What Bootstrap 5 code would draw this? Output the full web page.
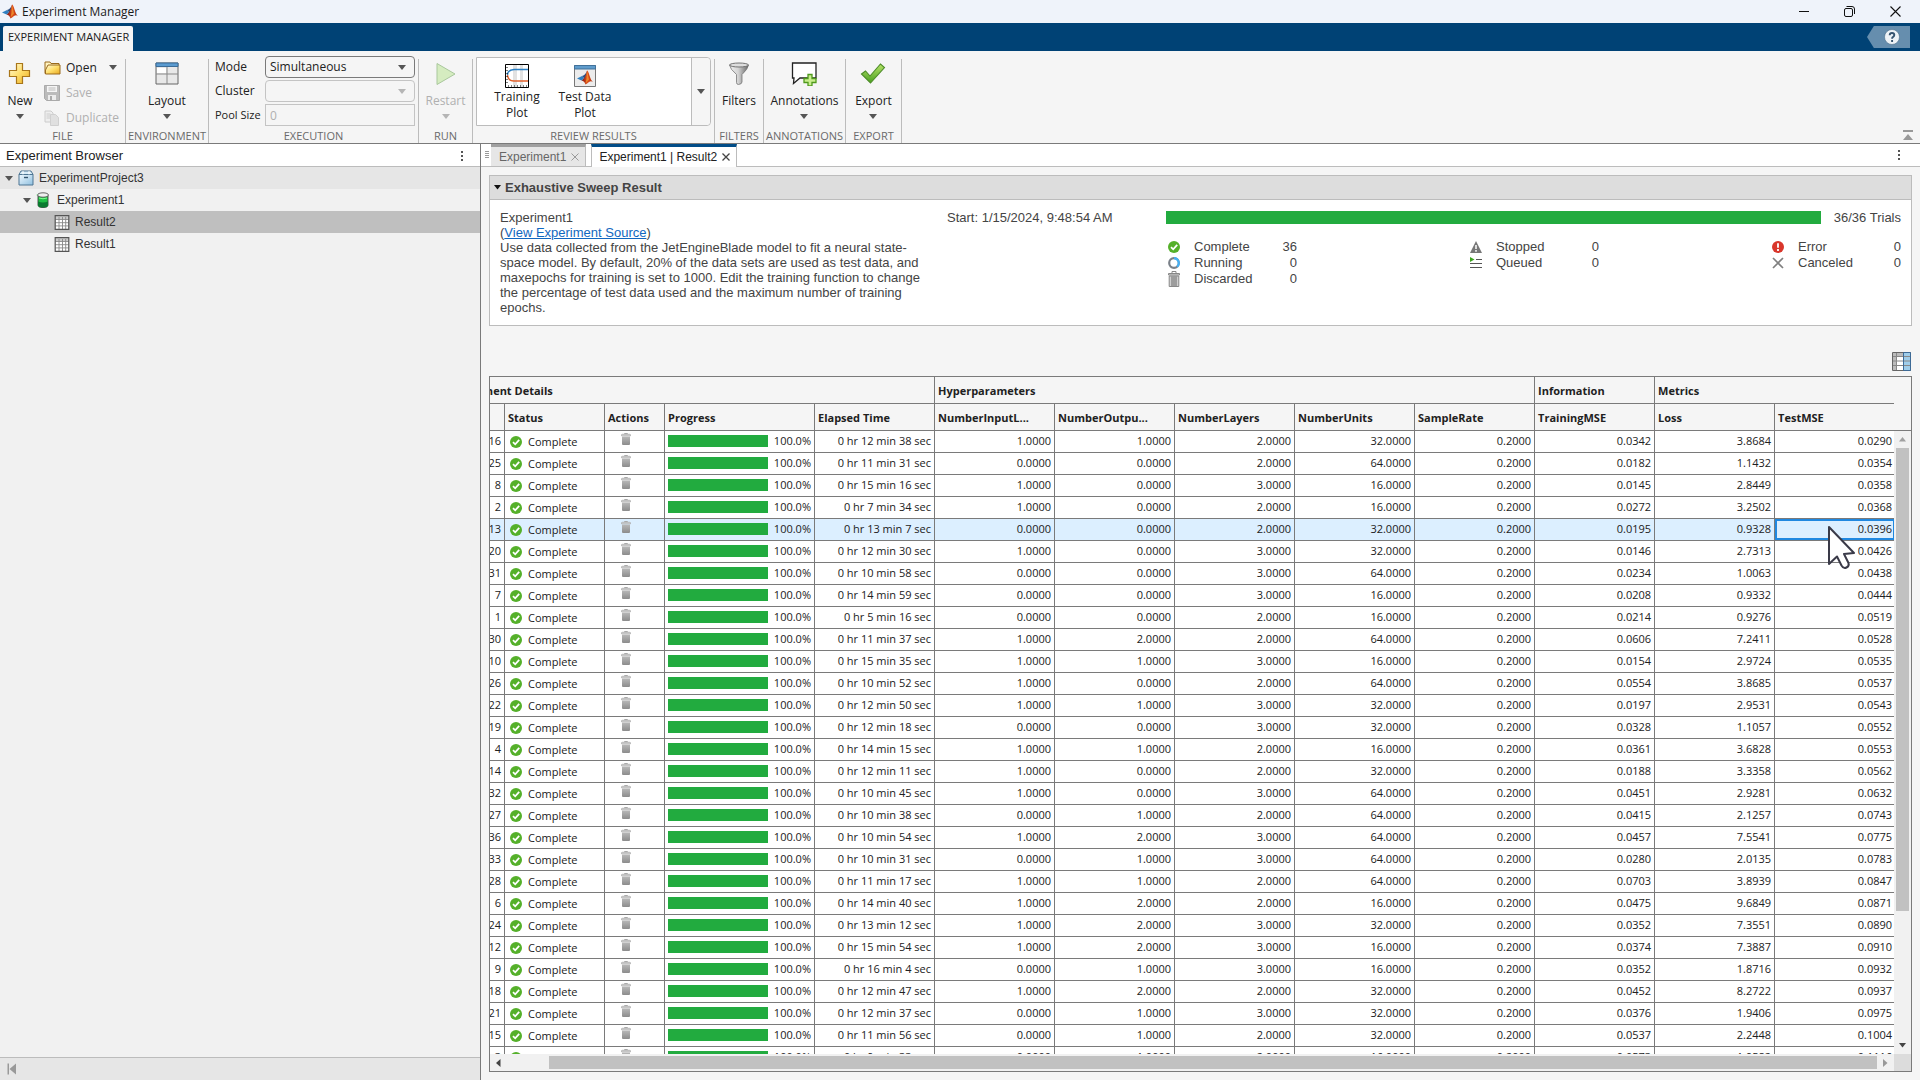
<!DOCTYPE html>
<html lang="en">
<head>
<meta charset="utf-8">
<meta name="viewport" content="width=device-width, initial-scale=1">
<title>Experiment Manager</title>
<link href="https://cdn.jsdelivr.net/npm/bootstrap@5.3.0/dist/css/bootstrap.min.css" rel="stylesheet">
<style>
  :root { --ui: "Open Sans", "Noto Sans", sans-serif; --doc: "Liberation Sans", Arial, sans-serif; --line: #7a7a7a; --soft: #bcbcbc; --go: #22ab3f; }
  body { font: 12px/16px var(--ui); color: #212121; background: #f5f5f5; height: 100vh; overflow: hidden; }
  svg { display: block; flex: none; }
  button { font: inherit; color: inherit; background: none; border: 0; padding: 0; }
  .caret { width: 0; height: 0; border: 4px solid transparent; border-top: 5px solid #555; border-bottom: 0; flex: none; }
  .faded { color: #b0b0b0; }
  .faded .caret { border-top-color: #b5b5b5; }

  .titlebar { height: 23px; background: #eff3fa; color: #1a1a1a; padding: 0 19px 0 2px; }
  .titlebar .win { gap: 35px; }
  .ribbon { height: 28px; background: #004275; padding: 3px 10px 0 3px; }
  .ribbon-tab { height: 25px; background: #f5f5f5; border-radius: 2px 2px 0 0; padding: 0 4px 3px 5px; font-size: 11px; }
  .help { width: 43px; height: 22px; background: #668eae; clip-path: polygon(16% 0, 100% 0, 100% 100%, 16% 100%, 0 50%); padding-left: 6px; }

  .strip { height: 93px; border-bottom: 1px solid var(--line); padding-top: 8px; font-size: 12px; }
  .group { border-right: 1px solid var(--soft); }
  .group-body { flex: 1; min-height: 0; }
  .group-name { font-size: 11px; line-height: 14px; color: #6a6a6a; text-align: center; }
  .big { display: flex; flex-direction: column; align-items: center; padding-top: 3px; }
  .big svg { margin-bottom: 7px; }
  .big .caret { margin-top: 5px; }
  .new-btn { width: 40px; }
  .file-list { margin-top: -4px; }
  .small-btn { display: flex; align-items: center; gap: 5px; height: 25px; }
  .g-file { width: 126px; }
  .g-env { width: 83px; } .g-exec { width: 210px; } .g-run { width: 54px; }
  .g-review { width: 242px; } .g-filter { width: 49px; } .g-note { width: 82px; } .g-export { width: 56px; }
  .exec { gap: 2px; margin-top: -3px; padding-left: 6px; }
  .exec label { width: 50px; white-space: nowrap; font-size: 12px; }
  .exec label.tight { font-size: 11px; }
  .field { width: 150px; height: 22px; font: 12px/18px var(--ui); padding: 0 4px; background-color: #f5f5f5; border: 1px solid #c4c4c4; border-radius: 0; color: #212121; appearance: none; }
  .field:disabled { background-color: #f5f5f5; color: #b0b0b0; opacity: 1; }
  .pick { position: relative; }
  .pick .field { border-radius: 4px; display: block; }
  .pick .caret { position: absolute; right: 9px; top: 9px; pointer-events: none; }
  .pick.live .field { border-color: var(--line); }
  .gallery { border: 1px solid var(--soft); border-radius: 0 4px 4px 0; background: #fff; height: 69px; margin: -2px 3px 0; }
  .gallery-list { padding-left: 6px; }
  .gallery-more { width: 19px; background: #f5f5f5; border-left: 1px solid var(--soft); border-radius: 0 4px 4px 0; }
  .shot { width: 68px; display: flex; flex-direction: column; align-items: center; line-height: 16px; padding-top: 6px; }
  .shot svg { margin-bottom: 1px; }
  .collapse-btn { padding: 0 6px 2px 0; }

  main { min-height: 0; }
  .browser { flex: 0 0 25%; background: #f1f1f1; font: 12px/22px var(--doc); color: #333; }
  .pane-head { height: 23px; background: #fff; border-bottom: 1px solid var(--soft); font-size: 13px; line-height: 20px; color: #212121; padding: 1px 16px 0 6px; }
  .node { height: 22px; gap: 5px; font-size: 12px; color: #333; }
  .lvl0 { padding-left: 5px; background: #e6e6e6; } .lvl1 { padding-left: 23px; } .lvl2 { padding-left: 54px; }
  .node.on { background: #bfbfbf; }
  .browser-foot { height: 23px; background: #e6e6e6; border-top: 1px solid var(--soft); padding-left: 7px; }

  .work { border-left: 1px solid var(--line); font-family: var(--doc); min-width: 0; min-height: 0; }
  .doc-tabs { height: 23px; flex: none; background: #fff; border-bottom: 1px solid var(--soft); padding: 0 19px 0 3px; font-size: 12px; }
  .doc-tab { height: 22px; border-top: 3px solid #a0a0a0; background: #e6e6e6; color: #666; border-right: 1px solid var(--soft); padding: 0 6px 0 8px; gap: 5px; line-height: 18px; }
  .doc-tab.on { height: 23px; margin-left: 5px; border-top-color: #004c87; background: #fff; color: #212121; border-left: 1px solid var(--soft); padding-left: 7px; }
  .sheet { padding: 8px; min-height: 0; }
  .summary { flex: none; border: 1px solid var(--soft); font-size: 13px; line-height: 15px; color: #444; }
  .summary-head { height: 24px; background: #ddd; border-bottom: 1px solid var(--soft); font-weight: bold; gap: 4px; padding-left: 4px; font-size: 13px; }
  .summary-body { height: 125px; background: #fff; padding: 10px 10px 0; }
  .about { flex: 0 0 447px; padding-right: 20px; }
  .about a { color: #1167c0; }
  .started { flex: 1 1 219px; }
  .tally { flex: 0 1 735px; }
  .overall { gap: 13px; margin-bottom: 14px; }
  .meter { height: 13px; border-radius: 0; background: #ddd; --bs-progress-bar-bg: var(--go); }
  .counts { width: 131px; line-height: 16px; }
  .counts > div { height: 16px; }
  .counts .pic { width: 28px; padding-left: 2px; }
  .tools { height: 50px; flex: none; padding: 0 1px 5px 0; }

  .frame { border: 1px solid var(--line); min-height: 0; font-family: var(--ui); }
  .view { min-width: 0; min-height: 0; overflow: hidden; }
  .trials { width: calc(100% + 45px); margin-left: -45px; table-layout: fixed; border-collapse: separate; border-spacing: 0; font-size: 11px; line-height: 16px; color: #212121; }
  .trials th { height: 27px; padding: 1px 3px 0; border-right: 1px solid var(--line); border-bottom: 1px solid var(--line); font-size: 11px; font-weight: 700; overflow: hidden; text-overflow: ellipsis; white-space: nowrap; }
  .trials td { height: 22px; padding: 2px 3px 0; background: #fff; border-right: 1px solid var(--line); border-bottom: 1px solid var(--line); text-align: right; vertical-align: top; white-space: nowrap; }
  .trials td:last-child { border-right: 0; }
  .trials tr.on td { background: #dcefff; }
  .trials td.act svg { margin-left: 13px; }
  .ok-cell { gap: 5px; padding: 1px 0 0 1px; }
  .trials td.focus { position: relative; box-shadow: inset 0 0 0 2px #2088e0; }
  .pointer { position: absolute; left: 52px; top: 6px; z-index: 2; }
  .bar { width: 100px; height: 12px; background: #e0e0e0; border-radius: 0; --bs-progress-bar-bg: var(--go); }
  .vbar { width: 17px; flex: none; background: #f1f1f1; }
  .vbar-top { height: 54px; flex: none; background: #f5f5f5; border-bottom: 1px solid var(--line); }
  .cap { width: 17px; height: 17px; display: flex; align-items: center; justify-content: center; flex: none; }
  .vthumb { width: 13px; height: 78.6%; margin-left: 2px; background: #c1c1c1; }
  .hbar { height: 17px; flex: none; background: #f1f1f1; }
  .hthumb { height: 13px; width: 96.9%; background: #c1c1c1; }
  .corner { width: 17px; background: #dcdcdc; }
</style>
<script src="https://cdn.jsdelivr.net/npm/bootstrap@5.3.0/dist/js/bootstrap.bundle.min.js"></script>
</head>
<body class="d-flex flex-column">

<svg width="0" height="0" class="position-absolute" aria-hidden="true">
  <defs>
    <linearGradient id="gold" x1="0" y1="0" x2="1" y2="1"><stop offset="0" stop-color="#fffbe0"/><stop offset=".5" stop-color="#ffdf6b"/><stop offset="1" stop-color="#e8a820"/></linearGradient>
    <linearGradient id="steel" x1="0" y1="0" x2="1" y2="0"><stop offset="0" stop-color="#eee"/><stop offset=".45" stop-color="#d5d5d5"/><stop offset="1" stop-color="#666"/></linearGradient>
    <linearGradient id="binfill" x1="0" y1="0" x2="0" y2="1"><stop offset="0" stop-color="#b8b8b8"/><stop offset="1" stop-color="#8c8c8c"/></linearGradient>
    <linearGradient id="leaf" x1="0" y1="0" x2="0" y2="1"><stop offset="0" stop-color="#b6e368"/><stop offset="1" stop-color="#4aa020"/></linearGradient>
    <linearGradient id="box" x1="0" y1="0" x2="1" y2="1"><stop offset="0" stop-color="#f0f9ff"/><stop offset="1" stop-color="#8fc0e0"/></linearGradient>
    <linearGradient id="ember" x1="0" y1="0" x2="1" y2="0"><stop offset="0" stop-color="#7a1010"/><stop offset=".5" stop-color="#e2501c"/><stop offset="1" stop-color="#b03010"/></linearGradient>
    <symbol id="ok" viewBox="0 0 12 12"><circle cx="6" cy="6" r="6" fill="#55b02a"/><path d="M3 6.200 5.200 8.300 9.200 3.900" fill="none" stroke="#fff" stroke-width="1.800"/></symbol>
    <symbol id="bin" viewBox="0 0 10 12"><path d="M3.500 1V.500h3V1" fill="none" stroke="#aaa"/><path d="M.500 2.800V2q0-.700.700-.700h7.600q.700 0 .700.700v.8z" fill="#e4e4e4" stroke="#a8a8a8" stroke-width=".8"/><path d="M1 3.500h8V11q0 1-1 1H2q-1 0-1-1z" fill="url(#binfill)"/></symbol>
    <symbol id="sheet" viewBox="0 0 15 15"><path d="M1 1h13v13H1z" fill="#fff"/><path d="M1 1h13v3H1z" fill="#ccc"/><path d="M1 4.500h13M1 7.700h13M1 10.900h13M4.500 2v12M8 2v12M11.200 2v12" stroke="#888" stroke-width=".9"/><path d="M.700.700h13.600v13.600H.700z" fill="none" stroke="#555" stroke-width="1.200"/></symbol>
    <symbol id="membrane" viewBox="0 0 16 14"><path d="M0 8 5 5.500 7 7.500 4.500 10z" fill="#2f7fc0"/><path d="M5 5.500Q8 5 10 .500L8.500 9 4.500 10 7 7.500z" fill="#2c4f80"/><path d="M10 0Q11 0 12.500 5T16 11.500Q14 10 12 11.500T8.500 14Q7.500 10.500 4.500 10 8 9 10 0z" fill="url(#ember)"/><path d="M10 .500 9.500 8 8.500 13 12 9z" fill="#f2a030" opacity=".7"/></symbol>
  </defs>
</svg>

<header>
  <div class="titlebar d-flex align-items-center">
    <svg width="16" height="15" class="me-1"><use href="#membrane"/></svg>
    <span>Experiment Manager</span>
    <div class="win d-flex align-items-center ms-auto">
      <button aria-label="Minimize"><svg width="10" height="11"><path d="M0 5.500h10" stroke="#111"/></svg></button>
      <button aria-label="Restore"><svg width="11" height="11" fill="none" stroke="#111"><rect x=".5" y="2.500" width="8" height="8" rx="1.500"/><path d="M2.500.500H8Q10.500.500 10.500 3v5"/></svg></button>
      <button aria-label="Close"><svg width="11" height="11"><path d="M.5.500l10 10M10.500.500l-10 10" stroke="#111" stroke-width="1.100"/></svg></button>
    </div>
  </div>
  <div class="ribbon d-flex justify-content-between align-items-start">
    <button class="ribbon-tab">EXPERIMENT MANAGER</button>
    <button class="help d-flex align-items-center justify-content-center" aria-label="Help"><svg width="16" height="16"><circle cx="8" cy="8" r="7.500" fill="#eef3f7" stroke="#4c6f8c" stroke-width=".6"/><path d="M5.700 6.200Q5.700 4 8 4t2.300 2q0 1.200-1.200 1.900Q8.100 8.400 8.100 9.700M8.100 11v1.900" fill="none" stroke="#34536f" stroke-width="1.900"/></svg></button>
  </div>
  <div class="strip d-flex">
    <section class="group g-file d-flex flex-column">
      <div class="group-body d-flex">
        <button class="big new-btn"><svg width="24" height="24"><path d="M8.500 1.500h6v7h7v6h-7v7h-6v-7h-7v-6h7z" fill="url(#gold)" stroke="#a9761a" stroke-width="1.200"/></svg>New<span class="caret"></span></button>
        <div class="file-list flex-grow-1 ps-1">
          <button class="small-btn w-100"><svg width="17" height="14"><path d="M1 12.500V1h5l1 1.500h8V11" fill="#fff3c0" stroke="#9a6a1c"/><path d="M4 4h12v9H1.500V9z" fill="url(#gold)" stroke="#9a6a1c"/></svg>Open<span class="caret ms-auto me-2"></span></button>
          <button class="small-btn faded" disabled><svg width="17" height="16"><path d="M.5.500h15v15h-13l-2-2z" fill="#bbb" stroke="#aaa"/><path d="M3 1h10v6H3z" fill="#f5f5f5"/><path d="M4.500 3h7M4.500 5h7" stroke="#bbb"/><path d="M4 10h8v5H4z" fill="#ececec"/><path d="M6 11h2v4H6z" fill="#aaa"/></svg>Save</button>
          <button class="small-btn faded" disabled><svg width="17" height="16"><path d="M1 1h6l2 2v9H1z" fill="#eee" stroke="#ccc"/><path d="M2.500 4h4M2.500 6h4M2.500 8h4" stroke="#ccc"/><path d="M6.500 4.500h5l3 3v8h-8z" fill="#e0e0e0" stroke="#d0d0d0"/></svg>Duplicate</button>
        </div>
      </div>
      <div class="group-name">FILE</div>
    </section>
    <section class="group g-env d-flex flex-column">
      <div class="group-body d-flex justify-content-center">
        <button class="big"><svg width="24" height="24"><path d="M1 1h22v21H1z" fill="#e8e8e8" stroke="#666"/><path d="M1 1h22v3.500H1z" fill="#5b9bd0" stroke="#3b6c98"/><path d="M1 12h22M12 5v17" stroke="#888"/><path d="M2 6h9v5H2z" fill="#fff"/></svg>Layout<span class="caret"></span></button>
      </div>
      <div class="group-name">ENVIRONMENT</div>
    </section>
    <section class="group g-exec d-flex flex-column">
      <div class="group-body">
        <div class="exec d-flex flex-column">
          <div class="d-flex align-items-center"><label for="mode">Mode</label><span class="pick live"><select class="field" id="mode"><option>Simultaneous</option><option>Sequential</option></select><span class="caret"></span></span></div>
          <div class="d-flex align-items-center"><label for="cluster">Cluster</label><span class="pick faded"><select class="field" id="cluster" disabled><option></option></select><span class="caret"></span></span></div>
          <div class="d-flex align-items-center"><label for="pool" class="tight">Pool Size</label><input class="field" id="pool" value="0" disabled></div>
        </div>
      </div>
      <div class="group-name">EXECUTION</div>
    </section>
    <section class="group g-run d-flex flex-column">
      <div class="group-body d-flex justify-content-center">
        <button class="big faded" disabled><svg width="24" height="24"><path d="M3 1.500 21 12 3 22.500z" fill="#d5ecc0" stroke="#a9c79c"/></svg>Restart<span class="caret"></span></button>
      </div>
      <div class="group-name">RUN</div>
    </section>
    <section class="group g-review d-flex flex-column">
      <div class="group-body">
        <div class="gallery d-flex">
          <div class="gallery-list d-flex flex-grow-1">
            <button class="shot"><svg width="24" height="24"><path d="M.5.500h23v23H.500z" fill="#fff"/><path d="M8 1h4v22H8zM15 1h3v22h-3z" fill="#e2e2e2"/><path d="M23 5.500H9Q2.500 6 2.500 11" fill="none" stroke="#2b80c4" stroke-width="1.400"/><path d="M2.500 11Q3 17 9 17h14" fill="none" stroke="#e2622c" stroke-width="1.400"/><path d="M3 22h20M2 3v18" stroke="#000" stroke-dasharray="1 2"/><path d="M.5.500h23v23H.500z" fill="none" stroke="#000"/></svg>Training<br>Plot</button>
            <button class="shot"><svg width="24" height="24"><path d="M1.500 1.500h21v21h-21z" fill="#ececec" stroke="#777"/><path d="M1.500 1.500h21V5h-21z" fill="#5f9ccc" stroke="#41719a"/><svg x="4" y="6" width="16" height="15"><use href="#membrane"/></svg></svg>Test Data<br>Plot</button>
          </div>
          <button class="gallery-more d-flex align-items-center justify-content-center" aria-label="More plots"><span class="caret"></span></button>
        </div>
      </div>
      <div class="group-name">REVIEW RESULTS</div>
    </section>
    <section class="group g-filter d-flex flex-column">
      <div class="group-body d-flex justify-content-center">
        <button class="big"><svg width="24" height="24"><path d="M2.500 3Q3 7 9.500 12.500v8q0 2 2 2 3.500-.5 3.500-2.500v-7.500Q21 7 21.500 3z" fill="url(#steel)" stroke="#777" stroke-width=".8"/><ellipse cx="12" cy="3" rx="9.500" ry="2" fill="#ddd" stroke="#666" stroke-width=".9"/></svg>Filters</button>
      </div>
      <div class="group-name">FILTERS</div>
    </section>
    <section class="group g-note d-flex flex-column">
      <div class="group-body d-flex justify-content-center">
        <button class="big"><svg width="26" height="24"><path d="M1.500 1H25v15H9l-6.500 5.500.500-5.500H1.500z" fill="#fff" stroke="#222" stroke-width="1.300"/><path d="M17 12.500h4v4h4v4h-4V24h-4v-3.500h-4v-4h4z" fill="#c9ee8e" stroke="#4f9a1c" stroke-width="1.300"/></svg>Annotations<span class="caret"></span></button>
      </div>
      <div class="group-name">ANNOTATIONS</div>
    </section>
    <section class="group g-export d-flex flex-column">
      <div class="group-body d-flex justify-content-center">
        <button class="big"><svg width="26" height="24"><path d="M1.500 12 5.500 9l4.500 5L20.500 2l4 3.500L10.500 21z" fill="url(#leaf)" stroke="#4d8c28" stroke-width="1.100"/></svg>Export<span class="caret"></span></button>
      </div>
      <div class="group-name">EXPORT</div>
    </section>
    <button class="collapse-btn ms-auto align-self-end" aria-label="Collapse toolstrip"><svg width="12" height="11"><path d="M1 0h10v2H1zM6 4l5 6H1z" fill="#999"/></svg></button>
  </div>
</header>

<main class="d-flex flex-grow-1">
  <aside class="browser d-flex flex-column">
    <div class="pane-head d-flex justify-content-between align-items-center">Experiment Browser
      <button aria-label="Browser options"><svg width="4" height="12"><path d="M1 1h2v2H1zM1 5h2v2H1zM1 9h2v2H1z" fill="#555"/></svg></button></div>
    <div class="node lvl0 d-flex align-items-center"><span class="caret"></span><svg width="16" height="16"><path d="M1 4.500h14v10.500H1z" fill="url(#box)" stroke="#4d7593"/><path d="M1 4.500 3 1h10l2 3.500z" fill="#d8ecf8" stroke="#4d7593"/><path d="M5 1v3.500M11 1v3.500" stroke="#fff"/><path d="M6 7.500h4" stroke="#34556e" stroke-width="1.400"/></svg>ExperimentProject3</div>
    <div class="node lvl1 d-flex align-items-center"><span class="caret"></span><svg width="16" height="16"><path d="M2 3.500v9.500q0 2.500 5 2.500t5-2.500V3.500z" fill="#1fbf45" stroke="#444" stroke-width=".9"/><path d="M2 9.500v3.500q0 2.500 5 2.500t5-2.500V9.500q-5 2-10 0z" fill="#0b7a30"/><ellipse cx="7" cy="3" rx="5.500" ry="2.200" fill="#eee" stroke="#555" stroke-width=".9"/><path d="M1 2.500 0 3.500M3 6q4 1.500 8 0" stroke="#7dff90" fill="none"/></svg>Experiment1</div>
    <div class="node lvl2 on d-flex align-items-center"><svg width="16" height="15"><use href="#sheet"/></svg>Result2</div>
    <div class="node lvl2 d-flex align-items-center"><svg width="16" height="15"><use href="#sheet"/></svg>Result1</div>
    <div class="browser-foot d-flex align-items-center mt-auto"><button aria-label="Collapse panel"><svg width="10" height="12"><path d="M.5.500h1.500v11H.500zM9 .500v11L2.500 6z" fill="#999"/></svg></button></div>
  </aside>

  <div class="work d-flex flex-column flex-grow-1">
    <div class="doc-tabs d-flex">
      <svg width="7" height="20"><path d="M1 7.500h4M1 9.500h4M1 11.500h4M1 13.500h4" stroke="#999"/></svg>
      <div class="doc-tab d-flex align-items-center">Experiment1<button aria-label="Close Experiment1"><svg width="8" height="8"><path d="M.5.500l7 7M7.500.500l-7 7" stroke="#999"/></svg></button></div>
      <div class="doc-tab on d-flex align-items-center">Experiment1 | Result2<button aria-label="Close Result2"><svg width="8" height="8"><path d="M.5.500l7 7M7.500.500l-7 7" stroke="#444" stroke-width="1.300"/></svg></button></div>
      <button class="ms-auto" aria-label="Document options"><svg width="4" height="12"><path d="M1 1h2v2H1zM1 5h2v2H1zM1 9h2v2H1z" fill="#555"/></svg></button>
    </div>

    <div class="sheet d-flex flex-column flex-grow-1">
      <section class="summary">
        <div class="summary-head d-flex align-items-center"><svg width="7" height="5"><path d="M0 0h7L3.500 4.500z" fill="#111"/></svg>Exhaustive Sweep Result</div>
        <div class="summary-body d-flex">
          <div class="about">Experiment1<br>(<a href="#">View Experiment Source</a>)<br>Use data collected from the JetEngineBlade model to fit a neural state-space model. By default, 20% of the data sets are used as test data, and maxepochs for training is set to 1000. Edit the training function to change the percentage of test data used and the maximum number of training epochs.</div>
          <div class="started">Start: 1/15/2024, 9:48:54 AM</div>
          <div class="tally">
            <div class="overall d-flex align-items-center"><div class="progress meter flex-grow-1"><div class="progress-bar w-100"></div></div><span>36/36 Trials</span></div>
            <div class="d-flex justify-content-between">
              <div class="counts">
                <div class="d-flex align-items-center"><span class="pic"><svg width="12" height="12"><use href="#ok"/></svg></span>Complete<span class="ms-auto">36</span></div>
                <div class="d-flex align-items-center"><span class="pic"><svg width="12" height="12"><circle cx="6" cy="6" r="4.800" fill="none" stroke="#7a8088" stroke-width="2.200"/><path d="M6 1.200a4.800 4.800 0 0 1 3 8.500" fill="none" stroke="#45b0f5" stroke-width="2.200"/></svg></span>Running<span class="ms-auto">0</span></div>
                <div class="d-flex align-items-center"><span class="pic"><svg width="12" height="16"><path d="M4 2V.500h4V2" fill="none" stroke="#888"/><path d="M.500 4V2.500h11V4z" fill="#ddd" stroke="#888"/><path d="M1.200 5h9.600v10.500H1.200z" fill="#d0d0d0" stroke="#888"/><path d="M4 5.500v9.500M6 5.500v9.500M8 5.500v9.500" stroke="#6a6a6a"/></svg></span>Discarded<span class="ms-auto">0</span></div>
              </div>
              <div class="counts">
                <div class="d-flex align-items-center"><span class="pic"><svg width="12" height="12"><path d="M6 0 12 12H0z" fill="#777"/><path d="M6 4v4M6 9v1.800" stroke="#fff" stroke-width="1.500"/></svg></span>Stopped<span class="ms-auto">0</span></div>
                <div class="d-flex align-items-center"><span class="pic"><svg width="12" height="12"><path d="M0 0 4.500 2.500 0 5z" fill="#3da520"/><path d="M6 2.500h6M0 6.500h12M0 10.500h12" stroke="#555" stroke-width="1.200"/></svg></span>Queued<span class="ms-auto">0</span></div>
              </div>
              <div class="counts">
                <div class="d-flex align-items-center"><span class="pic"><svg width="12" height="12"><circle cx="6" cy="6" r="6" fill="#d9362b"/><path d="M6 2.200v4.600M6 8v2" stroke="#fff" stroke-width="1.800"/></svg></span>Error<span class="ms-auto">0</span></div>
                <div class="d-flex align-items-center"><span class="pic"><svg width="12" height="12"><path d="M1 1l10 10M11 1 1 11" stroke="#808080" stroke-width="1.700"/></svg></span>Canceled<span class="ms-auto">0</span></div>
              </div>
            </div>
          </div>
        </div>
      </section>

      <div class="tools d-flex justify-content-end align-items-end">
        <button aria-label="Show or hide columns"><svg width="19" height="19"><path d="M.5.500h18v18H.500z" fill="#fff" stroke="#666"/><path d="M1 1h17v3H1zM1 4h3v14H1z" fill="#bbb"/><path d="M12 1h6v17h-6z" fill="#9fcdea"/><path d="M1 4.500h17M1 9h17M1 13.500h17M4.500 1v17" stroke="#888"/><path d="M11.500.500h7v18h-7z" fill="none" stroke="#3d6a96"/></svg></button>
      </div>

      <div class="frame d-flex flex-column flex-grow-1">
        <div class="d-flex flex-grow-1 view">
          <div class="view flex-grow-1">
            <table class="trials">
              <colgroup><col style="width:60px"><col style="width:100px"><col style="width:60px"><col style="width:150px"><col style="width:120px"><col style="width:120px"><col style="width:120px"><col style="width:120px"><col style="width:120px"><col style="width:120px"><col style="width:120px"><col style="width:120px"><col style="width:120px"></colgroup>
              <thead>
                <tr><th colspan="5">Experiment Details</th><th colspan="5">Hyperparameters</th><th>Information</th><th colspan="2">Metrics</th></tr>
                <tr><th></th><th>Status</th><th>Actions</th><th>Progress</th><th>Elapsed Time</th><th>NumberInputL...</th><th>NumberOutpu...</th><th>NumberLayers</th><th>NumberUnits</th><th>SampleRate</th><th>TrainingMSE</th><th>Loss</th><th>TestMSE</th></tr>
              </thead>
              <tbody id="rows"></tbody>
            </table>
          </div>
          <div class="vbar d-flex flex-column">
            <div class="vbar-top"></div>
            <span class="cap"><svg width="7" height="5"><path d="M0 4.500h7L3.500 0z" fill="#a0a0a0"/></svg></span>
            <div class="flex-grow-1"><div class="vthumb"></div></div>
            <span class="cap"><svg width="7" height="5"><path d="M0 0h7L3.500 4.500z" fill="#444"/></svg></span>
          </div>
        </div>
        <div class="hbar d-flex">
          <span class="cap"><svg width="5" height="8"><path d="M4.500 0v8L0 4z" fill="#444"/></svg></span>
          <div class="flex-grow-1 d-flex align-items-center justify-content-end"><div class="hthumb"></div></div>
          <span class="cap"><svg width="5" height="8"><path d="M0 0v8l4.500-4z" fill="#999"/></svg></span>
          <div class="corner"></div>
        </div>
      </div>
    </div>
  </div>
</main>

<script>
  // trial, minutes, seconds, input lags, output lags, layers, units, training MSE, loss, test MSE
  const trials = [
    [16,12,38,1,1,2,32,"0.0342","3.8684","0.0290"],
    [25,11,31,0,0,2,64,"0.0182","1.1432","0.0354"],
    [8,15,16,1,0,3,16,"0.0145","2.8449","0.0358"],
    [2,7,34,1,0,2,16,"0.0272","3.2502","0.0368"],
    [13,13,7,0,0,2,32,"0.0195","0.9328","0.0396"],
    [20,12,30,1,0,3,32,"0.0146","2.7313","0.0426"],
    [31,10,58,0,0,3,64,"0.0234","1.0063","0.0438"],
    [7,14,59,0,0,3,16,"0.0208","0.9332","0.0444"],
    [1,5,16,0,0,2,16,"0.0214","0.9276","0.0519"],
    [30,11,37,1,2,2,64,"0.0606","7.2411","0.0528"],
    [10,15,35,1,1,3,16,"0.0154","2.9724","0.0535"],
    [26,10,52,1,0,2,64,"0.0554","3.8685","0.0537"],
    [22,12,50,1,1,3,32,"0.0197","2.9531","0.0543"],
    [19,12,18,0,0,3,32,"0.0328","1.1057","0.0552"],
    [4,14,15,1,1,2,16,"0.0361","3.6828","0.0553"],
    [14,12,11,1,0,2,32,"0.0188","3.3358","0.0562"],
    [32,10,45,1,0,3,64,"0.0451","2.9281","0.0632"],
    [27,10,38,0,1,2,64,"0.0415","2.1257","0.0743"],
    [36,10,54,1,2,3,64,"0.0457","7.5541","0.0775"],
    [33,10,31,0,1,3,64,"0.0280","2.0135","0.0783"],
    [28,11,17,1,1,2,64,"0.0703","3.8939","0.0847"],
    [6,14,40,1,2,2,16,"0.0475","9.6849","0.0871"],
    [24,13,12,1,2,3,32,"0.0352","7.3551","0.0890"],
    [12,15,54,1,2,3,16,"0.0374","7.3887","0.0910"],
    [9,16,4,0,1,3,16,"0.0352","1.8716","0.0932"],
    [18,12,47,1,2,2,32,"0.0452","8.2722","0.0937"],
    [21,12,37,0,1,3,32,"0.0376","1.9406","0.0975"],
    [15,11,56,0,1,2,32,"0.0537","2.2448","0.1004"],
    [3,9,33,0,1,2,16,"0.0573","1.9582","0.1116"]
  ];
  const pointer = '<svg class="pointer" width="30" height="46"><path d="M2 2v37l8-7.500 4.500 9q2 3.500 5 2t2-4.500L17 29l10-1z" fill="#fff" stroke="#3a3a48" stroke-width="2" stroke-linejoin="round"/></svg>';
  document.getElementById("rows").innerHTML = trials.map(t => {
    const on = t[0] === 13;
    return `<tr${on ? ' class="on"' : ""}><td>${t[0]}</td>
      <td><div class="d-flex align-items-center ok-cell"><svg width="14" height="12"><use href="#ok"/></svg><span>Complete</span></div></td>
      <td class="act"><button aria-label="Discard trial ${t[0]}" class="d-block"><svg width="10" height="12"><use href="#bin"/></svg></button></td>
      <td><div class="d-flex align-items-center justify-content-between"><div class="progress bar"><div class="progress-bar" style="width:100%"></div></div>100.0%</div></td>
      <td>0 hr ${t[1]} min ${t[2]} sec</td>
      ${t.slice(3, 7).map(v => `<td>${v.toFixed(4)}</td>`).join("")}<td>0.2000</td>
      <td>${t[7]}</td><td>${t[8]}</td><td${on ? ' class="focus"' : ""}>${t[9]}${on ? pointer : ""}</td></tr>`;
  }).join("");
</script>
</body>
</html>
